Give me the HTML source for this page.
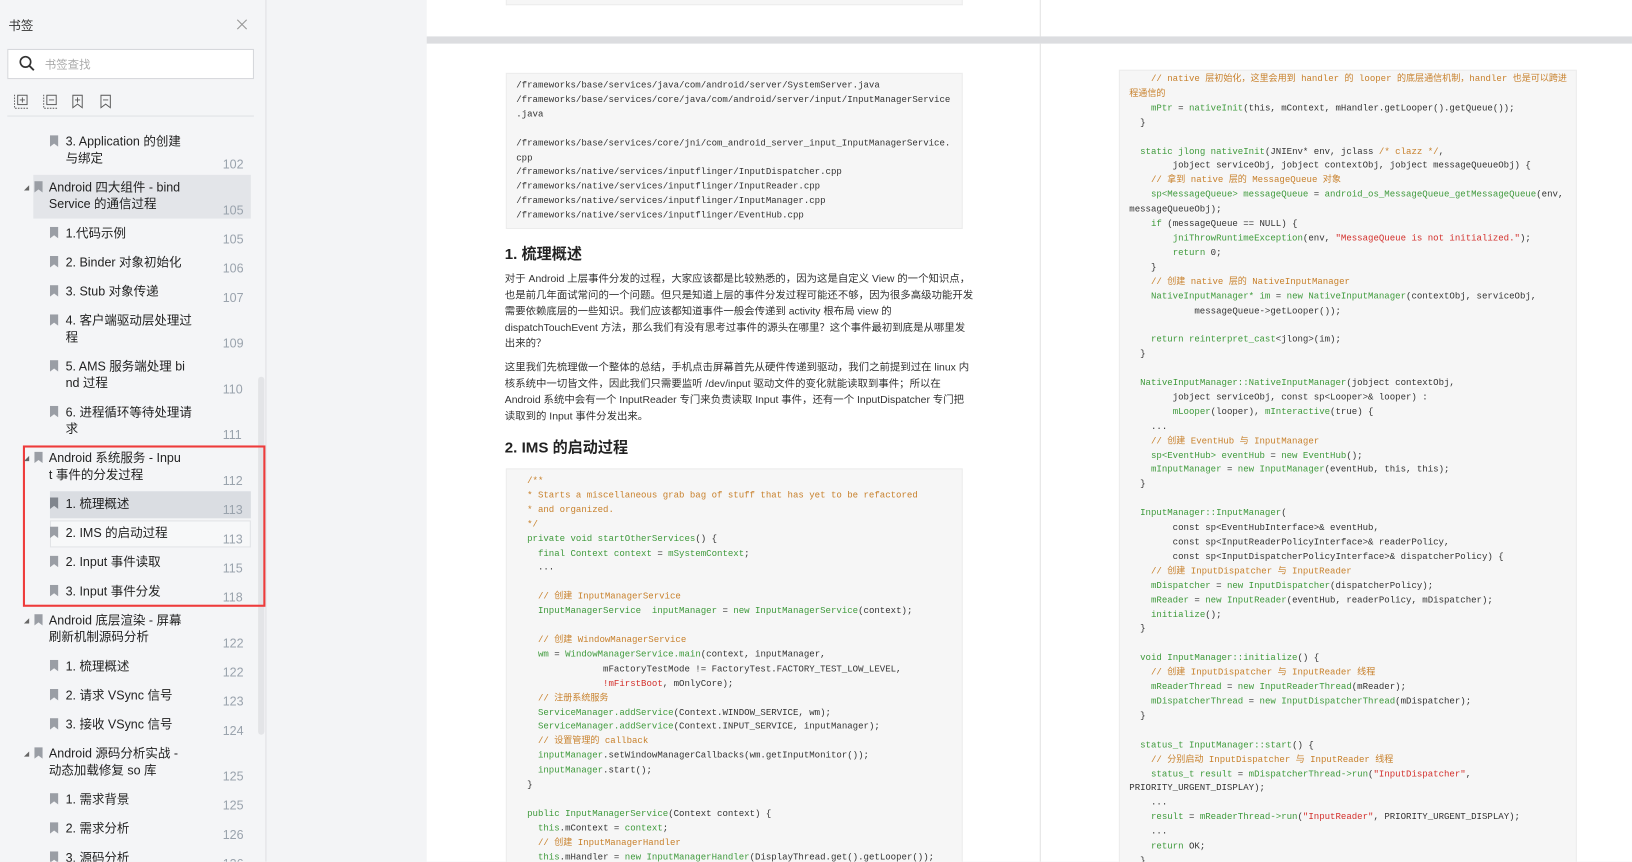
<!DOCTYPE html>
<html><head><meta charset="utf-8">
<style>
*{margin:0;padding:0;box-sizing:border-box}
html,body{width:1632px;height:862px;overflow:hidden;background:#f3f4f6}
#wrap{position:relative;width:1632px;height:862px;overflow:hidden}
#root{position:absolute;left:0;top:0;width:1568px;height:828px;overflow:hidden;transform:scale(1.0408);transform-origin:0 0;font-family:"Liberation Sans","Noto Sans CJK SC",sans-serif;color:#333}
.abs{position:absolute}
#side{left:0;top:0;width:256px;height:828px;background:#f4f5f7;border-right:1px solid #dfe0e3}
.it{position:absolute;font-size:12px;line-height:16px;color:#222;white-space:nowrap}
.num{position:absolute;left:214px;font-size:12px;color:#9aa3ad;line-height:14px}
.bm{position:absolute;width:8px;height:11px}
.tri{position:absolute;width:0;height:0;border-left:5px solid transparent;border-bottom:5px solid #666}
pre{font-family:"Liberation Mono","Noto Sans CJK SC",monospace;font-size:8.7px;line-height:13.9px;color:#333;white-space:pre}
.c{color:#c8812c}.g{color:#3f9a3c}.s{color:#d3302c}
.box{position:absolute;background:#f6f6f6;border:1px solid #ececec;overflow:hidden}
.p{font-size:10px;line-height:15.5px;color:#333;white-space:nowrap}
h2{position:absolute;font-size:14.5px;font-weight:bold;color:#222;white-space:nowrap}
</style></head><body><div id="wrap"><div id="root">

<div id="side" class="abs">
  <div class="abs" style="left:8px;top:16px;font-size:12px;color:#333">书签</div>
  <svg class="abs" style="left:227px;top:18px" width="11" height="11" viewBox="0 0 11 11"><path d="M1 1L10 10M10 1L1 10" stroke="#999" stroke-width="1.1"/></svg>
  <div class="abs" style="left:7px;top:47px;width:237px;height:29px;background:#fff;border:1px solid #d5d7db"></div>
  <svg class="abs" style="left:18px;top:53px" width="16" height="16" viewBox="0 0 16 16"><circle cx="6.5" cy="6.5" r="5" fill="none" stroke="#333" stroke-width="1.6"/><path d="M10 10L14.5 14.5" stroke="#333" stroke-width="1.8"/></svg>
  <div class="abs" style="left:43px;top:54px;font-size:11px;color:#aaa">书签查找</div>
  <svg class="abs" style="left:13px;top:90px" width="100" height="16" viewBox="0 0 100 16">
    <g fill="none" stroke="#555" stroke-width="0.9">
      <path d="M1 1v13h13" stroke-dasharray="1.5 1.2"/><rect x="4" y="1.5" width="9" height="9"/><path d="M8.5 3.5v5M6 6h5"/>
      <path d="M29 1v13h13" stroke-dasharray="1.5 1.2"/><rect x="32" y="1.5" width="9" height="9"/><path d="M34 6h5"/>
      <path d="M57 1.5h9v12l-4.5-3.5l-4.5 3.5z"/><path d="M61.5 3.5v5M59 6h5"/>
      <path d="M84 1.5h9v12l-4.5-3.5l-4.5 3.5z"/><path d="M86 6h5"/>
    </g>
  </svg>
  <div class="abs" style="left:7px;top:111px;width:237px;height:1px;background:#e0e2e5"></div>
  <div class="abs" style="left:248px;top:362px;width:6px;height:344px;background:#e3e4e7;border-radius:3px"></div>

  <div class="abs" style="left:32px;top:168px;width:209px;height:42px;background:#e3e5e9"></div>
  <div class="abs" style="left:48px;top:472px;width:193px;height:26px;background:#dadde2"></div>
  <div class="abs" style="left:48px;top:500px;width:193px;height:26px;border:1px solid #e1e3e6;background:#f7f8f9"></div>
  <div class="abs" style="left:22px;top:428px;width:233px;height:155px;border:2px solid #ee3b3b"></div>
</div>

<div class="abs" style="left:410px;top:0;width:1158px;height:35px;background:#fff"></div>
<div class="abs" style="left:486px;top:0;width:439px;height:5px;background:#f6f6f6;border:1px solid #ececec;border-top:none"></div>
<div class="abs" style="left:410px;top:35px;width:1158px;height:7px;background:#dcdde0"></div>
<div class="abs" style="left:999px;top:0;width:1px;height:35px;background:#e2e2e2"></div>
<div class="abs" style="left:410px;top:42px;width:1158px;height:786px;background:#fff"></div>
<div class="abs" style="left:999px;top:42px;width:1px;height:786px;background:#e2e2e2"></div>

<div class="box" style="left:486px;top:70px;width:439px;height:150px"><pre style="padding:5px 0 0 9px">/frameworks/base/services/java/com/android/server/SystemServer.java
/frameworks/base/services/core/java/com/android/server/input/InputManagerService
.java

/frameworks/base/services/core/jni/com_android_server_input_InputManagerService.
cpp
/frameworks/native/services/inputflinger/InputDispatcher.cpp
/frameworks/native/services/inputflinger/InputReader.cpp
/frameworks/native/services/inputflinger/InputManager.cpp
/frameworks/native/services/inputflinger/EventHub.cpp</pre></div>

<h2 style="left:485px;top:233px">1. 梳理概述</h2>
<div class="abs p" style="left:485px;top:261px">对于 Android 上层事件分发的过程，大家应该都是比较熟悉的，因为这是自定义 View 的一个知识点，<br>也是前几年面试常问的一个问题。但只是知道上层的事件分发过程可能还不够，因为很多高级功能开发<br>需要依赖底层的一些知识。我们应该都知道事件一般会传递到 activity 根布局 view 的<br>dispatchTouchEvent 方法，那么我们有没有思考过事件的源头在哪里？这个事件最初到底是从哪里发<br>出来的？</div>
<div class="abs p" style="left:485px;top:346px">这里我们先梳理做一个整体的总结，手机点击屏幕首先从硬件传递到驱动，我们之前提到过在 linux 内<br>核系统中一切皆文件，因此我们只需要监听 /dev/input 驱动文件的变化就能读取到事件；所以在<br>Android 系统中会有一个 InputReader 专门来负责读取 Input 事件，还有一个 InputDispatcher 专门把<br>读取到的 Input 事件分发出来。</div>
<h2 style="left:485px;top:419px">2. IMS 的启动过程</h2>

<div class="box" style="left:486px;top:450px;width:439px;height:390px"><pre style="padding:5px 0 0 9px">  <span class="c">/**
  * Starts a miscellaneous grab bag of stuff that has yet to be refactored
  * and organized.
  */</span>
  <span class="g">private void startOtherServices</span>() {
    <span class="g">final Context context</span> = <span class="g">mSystemContext</span>;
    ...

    <span class="c">// 创建 InputManagerService</span>
    <span class="g">InputManagerService  inputManager</span> = <span class="g">new InputManagerService</span>(context);

    <span class="c">// 创建 WindowManagerService</span>
    <span class="g">wm</span> = <span class="g">WindowManagerService.main</span>(context, inputManager,
                mFactoryTestMode != FactoryTest.FACTORY_TEST_LOW_LEVEL,
                <span class="s">!mFirstBoot</span>, mOnlyCore);
    <span class="c">// 注册系统服务</span>
    <span class="g">ServiceManager.addService</span>(Context.WINDOW_SERVICE, wm);
    <span class="g">ServiceManager.addService</span>(Context.INPUT_SERVICE, inputManager);
    <span class="c">// 设置管理的 callback</span>
    <span class="g">inputManager</span>.setWindowManagerCallbacks(wm.getInputMonitor());
    <span class="g">inputManager</span>.start();
  }

  <span class="g">public InputManagerService</span>(Context context) {
    <span class="g">this</span>.mContext = <span class="g">context</span>;
    <span class="c">// 创建 InputManagerHandler</span>
    <span class="g">this</span>.mHandler = <span class="g">new InputManagerHandler</span>(DisplayThread.get().getLooper());</pre></div>

<div class="box" style="left:1075px;top:67px;width:440px;height:780px"><pre style="padding:2px 0 0 9px">    <span class="c">// native 层初始化，这里会用到 handler 的 looper 的底层通信机制，handler 也是可以跨进</span>
<span class="c">程通信的</span>
    <span class="g">mPtr</span> = <span class="g">nativeInit</span>(this, mContext, mHandler.getLooper().getQueue());
  }

  <span class="g">static jlong nativeInit</span>(JNIEnv* env, jclass <span class="c">/* clazz */</span>,
        jobject serviceObj, jobject contextObj, jobject messageQueueObj) {
    <span class="c">// 拿到 native 层的 MessageQueue 对象</span>
    <span class="g">sp&lt;MessageQueue&gt; messageQueue</span> = <span class="g">android_os_MessageQueue_getMessageQueue</span>(env,
messageQueueObj);
    <span class="g">if</span> (messageQueue == NULL) {
        <span class="g">jniThrowRuntimeException</span>(env, <span class="s">"MessageQueue is not initialized."</span>);
        <span class="g">return</span> 0;
    }
    <span class="c">// 创建 native 层的 NativeInputManager</span>
    <span class="g">NativeInputManager* im</span> = <span class="g">new NativeInputManager</span>(contextObj, serviceObj,
            messageQueue-&gt;getLooper());

    <span class="g">return reinterpret_cast</span>&lt;jlong&gt;(im);
  }

  <span class="g">NativeInputManager::NativeInputManager</span>(jobject contextObj,
        jobject serviceObj, const sp&lt;Looper&gt;&amp; looper) :
        <span class="g">mLooper</span>(looper), <span class="g">mInteractive</span>(true) {
    ...
    <span class="c">// 创建 EventHub 与 InputManager</span>
    <span class="g">sp&lt;EventHub&gt; eventHub</span> = <span class="g">new EventHub</span>();
    <span class="g">mInputManager</span> = <span class="g">new InputManager</span>(eventHub, this, this);
  }

  <span class="g">InputManager::InputManager</span>(
        const sp&lt;EventHubInterface&gt;&amp; eventHub,
        const sp&lt;InputReaderPolicyInterface&gt;&amp; readerPolicy,
        const sp&lt;InputDispatcherPolicyInterface&gt;&amp; dispatcherPolicy) {
    <span class="c">// 创建 InputDispatcher 与 InputReader</span>
    <span class="g">mDispatcher</span> = <span class="g">new InputDispatcher</span>(dispatcherPolicy);
    <span class="g">mReader</span> = <span class="g">new InputReader</span>(eventHub, readerPolicy, mDispatcher);
    <span class="g">initialize</span>();
  }

  <span class="g">void InputManager::initialize</span>() {
    <span class="c">// 创建 InputDispatcher 与 InputReader 线程</span>
    <span class="g">mReaderThread</span> = <span class="g">new InputReaderThread</span>(mReader);
    <span class="g">mDispatcherThread</span> = <span class="g">new InputDispatcherThread</span>(mDispatcher);
  }

  <span class="g">status_t InputManager::start</span>() {
    <span class="c">// 分别启动 InputDispatcher 与 InputReader 线程</span>
    <span class="g">status_t result</span> = <span class="g">mDispatcherThread-&gt;run</span>(<span class="s">"InputDispatcher"</span>,
PRIORITY_URGENT_DISPLAY);
    ...
    <span class="g">result</span> = <span class="g">mReaderThread-&gt;run</span>(<span class="s">"InputReader"</span>, PRIORITY_URGENT_DISPLAY);
    ...
    <span class="g">return</span> OK;
  }</pre></div>

<svg class="bm" style="left:48px;top:130px" viewBox="0 0 8 11"><path d="M0 0h8v11l-4-3l-4 3z" fill="#9a9ea5"/></svg><div class="it" style="left:63px;top:128px">3. Application 的创建<br>与绑定</div><div class="num" style="top:151px">102</div>
<div class="tri" style="left:23px;top:178px"></div><svg class="bm" style="left:33px;top:174px" viewBox="0 0 8 11"><path d="M0 0h8v11l-4-3l-4 3z" fill="#9a9ea5"/></svg><div class="it" style="left:47px;top:172px">Android 四大组件 - bind<br>Service 的通信过程</div><div class="num" style="top:195px">105</div>
<svg class="bm" style="left:48px;top:218px" viewBox="0 0 8 11"><path d="M0 0h8v11l-4-3l-4 3z" fill="#9a9ea5"/></svg><div class="it" style="left:63px;top:216px">1.代码示例</div><div class="num" style="top:223px">105</div>
<svg class="bm" style="left:48px;top:246px" viewBox="0 0 8 11"><path d="M0 0h8v11l-4-3l-4 3z" fill="#9a9ea5"/></svg><div class="it" style="left:63px;top:244px">2. Binder 对象初始化</div><div class="num" style="top:251px">106</div>
<svg class="bm" style="left:48px;top:274px" viewBox="0 0 8 11"><path d="M0 0h8v11l-4-3l-4 3z" fill="#9a9ea5"/></svg><div class="it" style="left:63px;top:272px">3. Stub 对象传递</div><div class="num" style="top:279px">107</div>
<svg class="bm" style="left:48px;top:302px" viewBox="0 0 8 11"><path d="M0 0h8v11l-4-3l-4 3z" fill="#9a9ea5"/></svg><div class="it" style="left:63px;top:300px">4. 客户端驱动层处理过<br>程</div><div class="num" style="top:323px">109</div>
<svg class="bm" style="left:48px;top:346px" viewBox="0 0 8 11"><path d="M0 0h8v11l-4-3l-4 3z" fill="#9a9ea5"/></svg><div class="it" style="left:63px;top:344px">5. AMS 服务端处理 bi<br>nd 过程</div><div class="num" style="top:367px">110</div>
<svg class="bm" style="left:48px;top:390px" viewBox="0 0 8 11"><path d="M0 0h8v11l-4-3l-4 3z" fill="#9a9ea5"/></svg><div class="it" style="left:63px;top:388px">6. 进程循环等待处理请<br>求</div><div class="num" style="top:411px">111</div>
<div class="tri" style="left:23px;top:438px"></div><svg class="bm" style="left:33px;top:434px" viewBox="0 0 8 11"><path d="M0 0h8v11l-4-3l-4 3z" fill="#9a9ea5"/></svg><div class="it" style="left:47px;top:432px">Android 系统服务 - Inpu<br>t 事件的分发过程</div><div class="num" style="top:455px">112</div>
<svg class="bm" style="left:48px;top:478px" viewBox="0 0 8 11"><path d="M0 0h8v11l-4-3l-4 3z" fill="#80858d"/></svg><div class="it" style="left:63px;top:476px">1. 梳理概述</div><div class="num" style="top:483px">113</div>
<svg class="bm" style="left:48px;top:506px" viewBox="0 0 8 11"><path d="M0 0h8v11l-4-3l-4 3z" fill="#9a9ea5"/></svg><div class="it" style="left:63px;top:504px">2. IMS 的启动过程</div><div class="num" style="top:511px">113</div>
<svg class="bm" style="left:48px;top:534px" viewBox="0 0 8 11"><path d="M0 0h8v11l-4-3l-4 3z" fill="#9a9ea5"/></svg><div class="it" style="left:63px;top:532px">2. Input 事件读取</div><div class="num" style="top:539px">115</div>
<svg class="bm" style="left:48px;top:562px" viewBox="0 0 8 11"><path d="M0 0h8v11l-4-3l-4 3z" fill="#9a9ea5"/></svg><div class="it" style="left:63px;top:560px">3. Input 事件分发</div><div class="num" style="top:567px">118</div>
<div class="tri" style="left:23px;top:594px"></div><svg class="bm" style="left:33px;top:590px" viewBox="0 0 8 11"><path d="M0 0h8v11l-4-3l-4 3z" fill="#9a9ea5"/></svg><div class="it" style="left:47px;top:588px">Android 底层渲染 - 屏幕<br>刷新机制源码分析</div><div class="num" style="top:611px">122</div>
<svg class="bm" style="left:48px;top:634px" viewBox="0 0 8 11"><path d="M0 0h8v11l-4-3l-4 3z" fill="#9a9ea5"/></svg><div class="it" style="left:63px;top:632px">1. 梳理概述</div><div class="num" style="top:639px">122</div>
<svg class="bm" style="left:48px;top:662px" viewBox="0 0 8 11"><path d="M0 0h8v11l-4-3l-4 3z" fill="#9a9ea5"/></svg><div class="it" style="left:63px;top:660px">2. 请求 VSync 信号</div><div class="num" style="top:667px">123</div>
<svg class="bm" style="left:48px;top:690px" viewBox="0 0 8 11"><path d="M0 0h8v11l-4-3l-4 3z" fill="#9a9ea5"/></svg><div class="it" style="left:63px;top:688px">3. 接收 VSync 信号</div><div class="num" style="top:695px">124</div>
<div class="tri" style="left:23px;top:722px"></div><svg class="bm" style="left:33px;top:718px" viewBox="0 0 8 11"><path d="M0 0h8v11l-4-3l-4 3z" fill="#9a9ea5"/></svg><div class="it" style="left:47px;top:716px">Android 源码分析实战 -<br>动态加载修复 so 库</div><div class="num" style="top:739px">125</div>
<svg class="bm" style="left:48px;top:762px" viewBox="0 0 8 11"><path d="M0 0h8v11l-4-3l-4 3z" fill="#9a9ea5"/></svg><div class="it" style="left:63px;top:760px">1. 需求背景</div><div class="num" style="top:767px">125</div>
<svg class="bm" style="left:48px;top:790px" viewBox="0 0 8 11"><path d="M0 0h8v11l-4-3l-4 3z" fill="#9a9ea5"/></svg><div class="it" style="left:63px;top:788px">2. 需求分析</div><div class="num" style="top:795px">126</div>
<svg class="bm" style="left:48px;top:818px" viewBox="0 0 8 11"><path d="M0 0h8v11l-4-3l-4 3z" fill="#9a9ea5"/></svg><div class="it" style="left:63px;top:816px">3. 源码分析</div><div class="num" style="top:823px">126</div>

</div></div></body></html>
